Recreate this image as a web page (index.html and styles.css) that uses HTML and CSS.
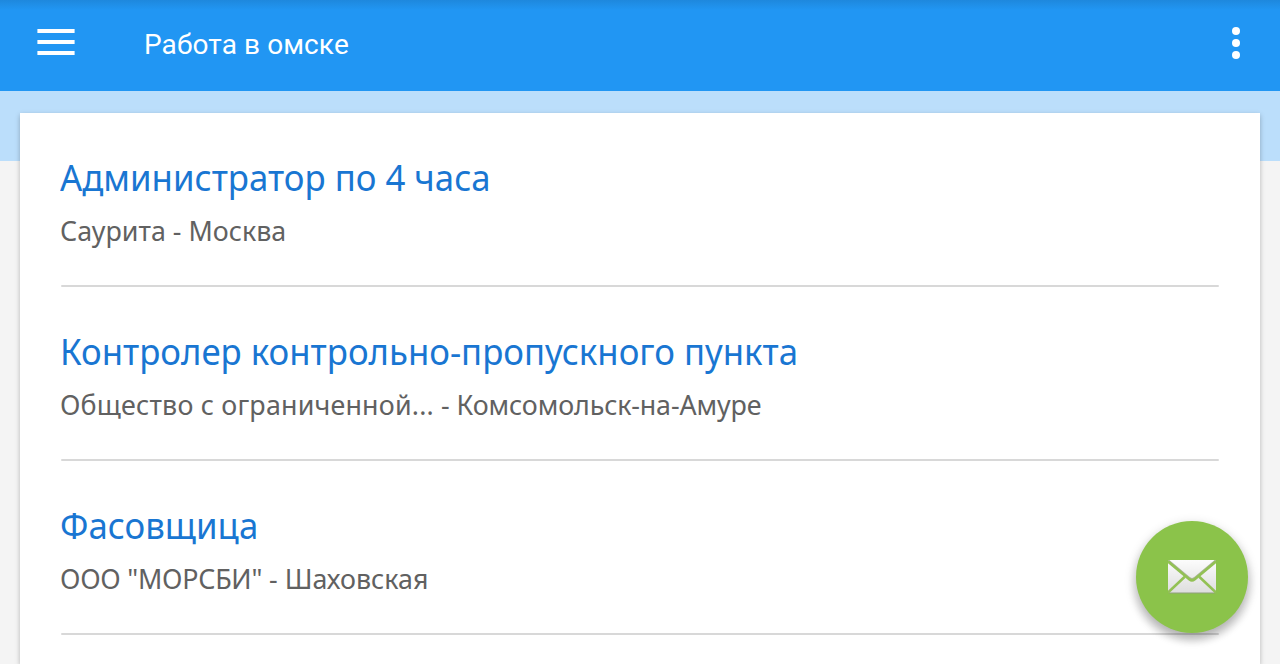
FILE: index.html
```html
<!DOCTYPE html>
<html lang="ru">
<head>
  <meta charset="UTF-8" />
  <meta name="viewport" content="width=device-width, initial-scale=1" />
  <title>Работа в омске</title>
  <link rel="stylesheet" href="styles.css">
</head>
<body>
  <header class="toolbar">
    <button class="menu-btn" aria-label="Меню">
      <span class="bar"></span>
      <span class="bar"></span>
      <span class="bar"></span>
    </button>
    <h1>Работа в омске</h1>
    <button class="more-btn" aria-label="Ещё">
      <span class="dot"></span>
      <span class="dot"></span>
      <span class="dot"></span>
    </button>
  </header>

  <main class="content">
    <ul class="card">
      <li class="job">
        <h2>Администратор по 4 часа</h2>
        <p>Саурита - Москва</p>
      </li>
      <li class="job">
        <h2>Контролер контрольно-пропускного пункта</h2>
        <p><span class="loose">Общество с ограниченной...</span> - <span class="snug">Комсомольск-на-Амуре</span></p>
      </li>
      <li class="job">
        <h2>Фасовщица</h2>
        <p><span class="tight">ООО "МОРСБИ"</span> - Шаховская</p>
      </li>
    </ul>
  </main>

  <button class="fab" aria-label="Написать">
    <svg width="48" height="34" viewBox="0 0 48 34">
      <defs>
        <linearGradient id="paper" x1="0" y1="0" x2="0" y2="1">
          <stop offset="0" stop-color="#fcfcfc" />
          <stop offset="1" stop-color="#dedede" />
        </linearGradient>
      </defs>
      <rect y="1" width="48" height="32.5" rx="2" fill="#8f9f7c" />
      <rect width="48" height="32.5" rx="2" fill="url(#paper)" />
      <path d="M0 0.6 L21.5 18.4 Q24 20.2 26.5 18.4 L48 0.6" fill="none" stroke="#a9b595" stroke-width="2.6" />
      <path d="M0 1.6 L21.5 19.4 Q24 21.2 26.5 19.4 L48 1.6 M0 32.5 L16.5 17 M48 32.5 L31.5 17" fill="none" stroke="#93c154" stroke-width="2.6" />
    </svg>
  </button>
</body>
</html>
```

FILE: styles.css
```css
* {
  box-sizing: border-box;
}
body {
  margin: 0;
  height: 664px;
  overflow: hidden;
  background-color: #f4f4f4;
  font-family: "Noto Sans", "Open Sans", sans-serif;
}
button {
  border: none;
  padding: 0;
  background: none;
  cursor: pointer;
}
h1, h2, p {
  margin: 0;
  font-weight: 400;
  white-space: nowrap;
}
.toolbar {
  display: flex;
  height: 91px;
  padding: 0 40px 0 37px;
  background: linear-gradient(#1e88dd, #2196f3 10px);
}
.toolbar h1 {
  flex: 1;
  margin-left: 69px;
  font-family: Roboto, sans-serif;
  font-size: 28px;
  line-height: 89px;
  letter-spacing: 0.1px;
  color: #fff;
}
.menu-btn {
  display: flex;
  flex-direction: column;
  gap: 7px;
  width: 38px;
  padding-top: 29px;
}
.bar {
  height: 4px;
  border: solid rgba(255,255,255,0.6);
  border-width: 0 1px;
  background-color: #fff;
  background-clip: padding-box;
}
.more-btn {
  display: flex;
  flex-direction: column;
  gap: 4px;
  padding-top: 27px;
}
.dot {
  width: 8px;
  height: 8px;
  border-radius: 50%;
  background-color: #fff;
}
.content {
  height: 573px;
  padding: 22px 20px 0;
  background: linear-gradient(#bbdefb, #bbdefb) no-repeat 0 0 / 100% 70px;
}
.card {
  height: 551px;
  margin: 0;
  padding: 0 40px;
  list-style: none;
  background-color: #fff;
  box-shadow: 0 2px 5px rgba(0,0,0,0.26);
}
.job {
  display: flex;
  flex-direction: column;
  height: 174px;
  padding-top: 40px;
}
.job::after {
  content: "";
  height: 2px;
  margin: auto 1px 0;
  border-radius: 2px;
  background-color: #d8d8d8;
}
.job h2 {
  font-size: 36px;
  line-height: 50px;
  color: #1976d2;
  transform: scaleX(0.966);
  transform-origin: 0 0;
}
.job p {
  margin-top: 8px;
  font-size: 28px;
  line-height: 38px;
  color: #616161;
  transform: scaleX(0.958);
  transform-origin: 0 0;
}
.loose {
  letter-spacing: 0.2px;
}
.snug {
  letter-spacing: -0.1px;
}
.tight {
  letter-spacing: -0.25px;
}
.fab {
  position: fixed;
  left: 1136px;
  top: 521px;
  display: flex;
  align-items: center;
  justify-content: center;
  width: 112px;
  height: 112px;
  border-radius: 50%;
  background-color: #8bc34a;
  box-shadow: 0 6px 10px rgba(0,0,0,0.26), 0 4px 8px 5px rgba(0,0,0,0.07);
}
```
